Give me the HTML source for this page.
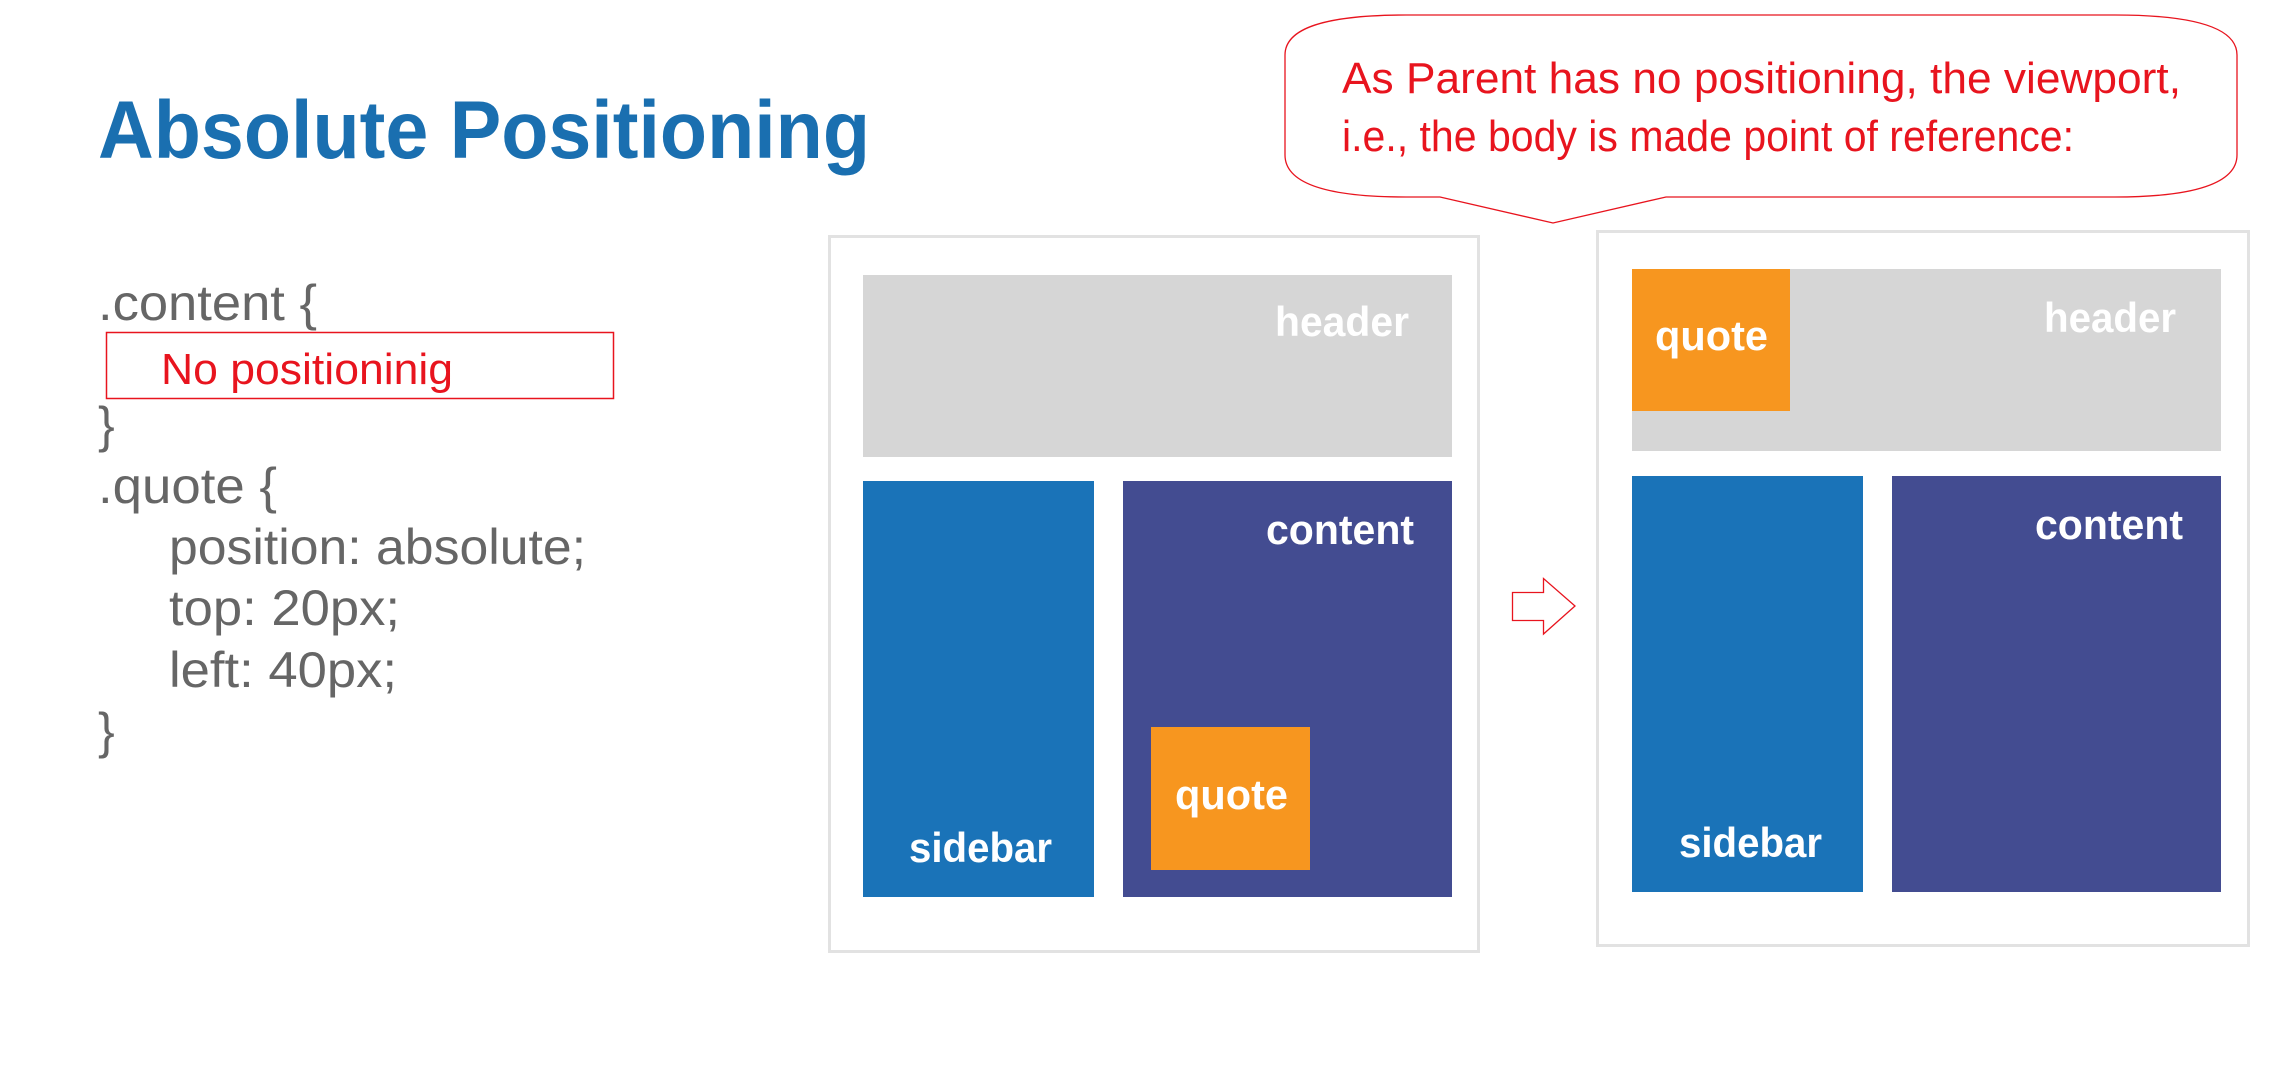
<!DOCTYPE html>
<html><head><meta charset="utf-8"><style>
html,body{margin:0;padding:0;background:#fff;width:2284px;height:1066px;overflow:hidden}
svg{display:block}
text{font-family:"Liberation Sans",sans-serif}
.code{fill:#666;font-size:50px}
.lbl{fill:#fff;font-size:42px;font-weight:bold}
.red{fill:#e8141e;font-size:44px}
</style></head><body>
<svg width="2284" height="1066" viewBox="0 0 2284 1066" xmlns="http://www.w3.org/2000/svg">
<text x="98" y="158" fill="#1a6fb0" font-size="82" font-weight="bold" textLength="772" lengthAdjust="spacingAndGlyphs">Absolute Positioning</text>

<text class="code" x="98" y="320" textLength="219" lengthAdjust="spacingAndGlyphs">.content {</text>
<rect x="106.5" y="332.5" width="507" height="66" fill="none" stroke="#e8141e" stroke-width="1.5"/>
<text class="red" x="161" y="384" font-size="44" textLength="292" lengthAdjust="spacingAndGlyphs">No positioninig</text>
<text class="code" x="98" y="442">}</text>
<text class="code" x="98" y="503" textLength="179" lengthAdjust="spacingAndGlyphs">.quote {</text>
<text class="code" x="169" y="564" textLength="417" lengthAdjust="spacingAndGlyphs">position: absolute;</text>
<text class="code" x="169" y="625" textLength="231" lengthAdjust="spacingAndGlyphs">top: 20px;</text>
<text class="code" x="169" y="687" textLength="228" lengthAdjust="spacingAndGlyphs">left: 40px;</text>
<text class="code" x="98" y="748">}</text>

<!-- left diagram -->
<rect x="829.5" y="236.5" width="649" height="715" fill="#fff" stroke="#e2e2e2" stroke-width="3"/>
<rect x="863" y="275" width="589" height="182" fill="#d6d6d6"/>
<rect x="863" y="481" width="231" height="416" fill="#1a73b8"/>
<rect x="1123" y="481" width="329" height="416" fill="#434c91"/>
<rect x="1151" y="727" width="159" height="143" fill="#f7961f"/>
<text class="lbl" x="1275" y="336" textLength="134" lengthAdjust="spacingAndGlyphs">header</text>
<text class="lbl" x="1266" y="544" textLength="148" lengthAdjust="spacingAndGlyphs">content</text>
<text class="lbl" x="1175" y="809" textLength="113" lengthAdjust="spacingAndGlyphs">quote</text>
<text class="lbl" x="909" y="862" textLength="143" lengthAdjust="spacingAndGlyphs">sidebar</text>

<!-- arrow -->
<path d="M1512.5 592.5 H1543.5 V578.5 L1575 606 L1543.5 634 V620.5 H1512.5 Z" fill="#fff" stroke="#e8141e" stroke-width="1.3"/>

<!-- right diagram -->
<rect x="1597.5" y="231.5" width="651" height="714" fill="#fff" stroke="#e2e2e2" stroke-width="3"/>
<rect x="1632" y="269" width="589" height="182" fill="#d6d6d6"/>
<rect x="1632" y="269" width="158" height="142" fill="#f7961f"/>
<rect x="1632" y="476" width="231" height="416" fill="#1a73b8"/>
<rect x="1892" y="476" width="329" height="416" fill="#434c91"/>
<text class="lbl" x="2044" y="332" textLength="132" lengthAdjust="spacingAndGlyphs">header</text>
<text class="lbl" x="1655" y="350" textLength="113" lengthAdjust="spacingAndGlyphs">quote</text>
<text class="lbl" x="2035" y="539" textLength="148" lengthAdjust="spacingAndGlyphs">content</text>
<text class="lbl" x="1679" y="857" textLength="143" lengthAdjust="spacingAndGlyphs">sidebar</text>

<!-- callout -->
<path d="M1406 15 H2115 C2195 15 2237 28 2237 55 V155 C2237 183 2195 197 2115 197 H1666 L1553 223 L1440 197 H1406 C1325 197 1285 183 1285 155 V55 C1285 28 1325 15 1406 15 Z" fill="#fff" stroke="#e8141e" stroke-width="1.3"/>
<text class="red" x="1342" y="93" textLength="839" lengthAdjust="spacingAndGlyphs">As Parent has no positioning, the viewport,</text>
<text class="red" x="1342" y="151" textLength="732" lengthAdjust="spacingAndGlyphs">i.e., the body is made point of reference:</text>
</svg>
</body></html>
